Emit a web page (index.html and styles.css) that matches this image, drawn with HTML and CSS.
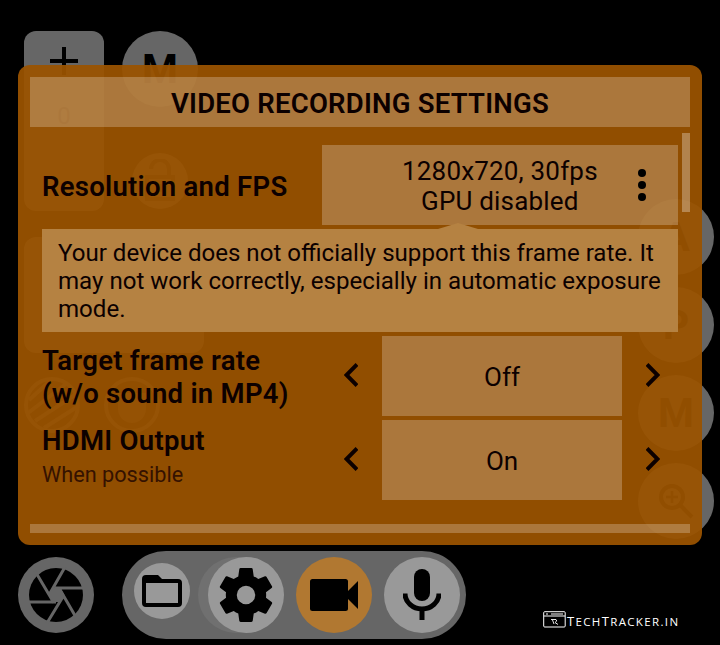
FILE: index.html
```html
<!DOCTYPE html>
<html lang="en">
<head>
<meta charset="utf-8">
<title>Video recording settings</title>
<link rel="stylesheet" href="styles.css">
</head>
<body>
<div class="screen">
  <div class="viewfinder">
    <div class="left-tools">
      <div class="tool-row">
        <div class="card exposure">
          <svg width="28" height="28" viewBox="0 0 28 28"><path d="M14 0v28M0 14h28" stroke="#000" stroke-width="4"/></svg>
          <span class="zero">0</span>
        </div>
        <div class="mode-stack">
          <div class="round mode"><span class="letter">M</span></div>
          <div class="round small">
            <svg width="32" height="44" viewBox="0 0 32 44"><path d="M7 10a9 9 0 0 1 18 0v7" fill="none" stroke="#222" stroke-width="4"/><path d="M3 18h26v22H3z" fill="none" stroke="#222" stroke-width="4"/><circle cx="16" cy="29" r="4" fill="#222"/></svg>
          </div>
        </div>
      </div>
      <div class="card wide"></div>
      <div class="filters">
        <svg width="56" height="56" viewBox="0 0 56 56" fill="none" stroke="#555" stroke-width="4"><circle cx="28" cy="28" r="26"/><path d="M5 23L26 4M4 36L42 7M11 44L51 18M20 51L53 30"/></svg>
        <svg width="56" height="56" viewBox="0 0 56 56" fill="none" stroke="#555" stroke-width="4"><circle cx="28" cy="28" r="26"/><path d="M14 16h28v16a14 14 0 0 1-28 0z" fill="#444" stroke="none"/></svg>
      </div>
    </div>
    <div class="right-tools">
      <div class="round"><span class="letter">A</span></div>
      <div class="round"><span class="letter">P</span></div>
      <div class="round"><span class="letter">M</span></div>
      <div class="round"><svg width="36" height="36" viewBox="0 0 36 36" fill="none" stroke="#000" stroke-width="4"><circle cx="14" cy="14" r="11"/><path d="M22 22l12 12"/><path d="M8 14h12M14 8v12" stroke-width="2.5"/></svg></div>
    </div>
  </div>

  <div class="bottom">
    <div class="round shutter">
      <svg width="76" height="76" viewBox="0 0 76 76"><circle cx="38" cy="38" r="27"/><path d="M47 10L31 38M67 31H37M59 62L41 31M29 66L46 38M9 45H38M17 14L36 46" stroke="#666" stroke-width="3"/><path d="M34.500 31h8l4 7-4 7h-8l-4-7z" fill="#666"/></svg>
    </div>
    <div class="pill">
      <div class="disc folder"><svg width="40" height="32" viewBox="0 0 40 32"><path fill-rule="evenodd" d="M4 0h12l4 4h16q4 0 4 4v20q0 4-4 4H4q-4 0-4-4V4q0-4 4-4zM4 8v20h32V8z"/></svg></div>
      <div class="disc gear">
        <svg width="56" height="56" viewBox="2 2 20 20"><path d="M19.140 12.940c.04-.3.060-.61.060-.94s-.02-.64-.07-.94l2.030-1.580a.49.49 0 0 0 .12-.61l-1.920-3.320a.49.49 0 0 0-.59-.22l-2.390.96a7 7 0 0 0-1.620-.94l-.36-2.540A.48.48 0 0 0 13.920 2.400h-3.840a.48.48 0 0 0-.48.410l-.36 2.540c-.59.240-1.130.57-1.620.94l-2.390-.96a.49.49 0 0 0-.59.220L2.720 8.870a.48.48 0 0 0 .12.610l2.030 1.580a6 6 0 0 0 0 1.880l-2.030 1.580a.49.49 0 0 0-.12.610l1.920 3.320c.12.220.37.290.59.220l2.390-.96c.5.38 1.030.7 1.620.94l.36 2.540c.05.240.24.410.48.410h3.840c.24 0 .44-.17.480-.41l.36-2.540c.59-.24 1.130-.56 1.620-.94l2.390.96c.22.080.47 0 .59-.22l1.920-3.320a.48.48 0 0 0-.12-.61zM12 15.300a3.300 3.300 0 1 1 0-6.600 3.300 3.300 0 0 1 0 6.600z"/></svg>
      </div>
      <div class="disc video"><svg width="48" height="32" viewBox="0 0 48 32"><rect width="38" height="32" rx="2.500"/><path d="M37 13L48 2v28L37 19z"/></svg></div>
      <div class="disc mic"><svg width="38" height="52" viewBox="0 0 38 52"><rect x="11" y="0" width="16" height="32" rx="8"/><path d="M2 24.500a17 15.500 0 0 0 34 0M19 40v11" fill="none" stroke="#000" stroke-width="5"/></svg></div>
    </div>
    <div class="brand">
      <svg width="23" height="17" viewBox="0 0 23 17" fill="none" stroke="#fff"><rect x=".7" y=".7" width="21.500" height="15.300" rx="1"/><path d="M1 5h21M3 3h2M8 3h12"/><path d="M8 8.500h5q2 1.500-1 3l3 2M9.500 9l1.500 4" stroke-width=".9"/></svg>
      <span class="brand-name"><b>T</b>ECH<b>T</b>RACKER.IN</span>
    </div>
  </div>

  <section class="dialog">
    <h1 class="title"><span>VIDEO RECORDING SETTINGS</span></h1>
    <div class="body">
      <div class="settings">
        <div class="resolution">
          <div class="label">Resolution and FPS</div>
          <div class="field select">
            <div class="choice">1280x720, 30fps<br>GPU disabled</div>
            <svg class="dots" width="8" height="32" viewBox="0 0 8 32"><circle cx="4" cy="4" r="4"/><circle cx="4" cy="16" r="4"/><circle cx="4" cy="28" r="4"/></svg>
          </div>
        </div>
        <p class="message">Your device does not officially support this frame rate. It<br>may not work correctly, especially in automatic exposure<br>mode.</p>
        <div class="option">
          <div class="label">Target frame rate<br>(w/o sound in MP4)</div>
          <svg class="arrow" width="14" height="24" viewBox="0 0 14 24"><path d="M13 1.500L2.500 12 13 22.500"/></svg>
          <div class="field">Off</div>
          <svg class="arrow" width="14" height="24" viewBox="0 0 14 24"><path d="M1 1.500L11.500 12 1 22.500"/></svg>
        </div>
        <div class="option">
          <div class="label hdmi">HDMI Output<small>When possible</small></div>
          <svg class="arrow" width="14" height="24" viewBox="0 0 14 24"><path d="M13 1.500L2.500 12 13 22.500"/></svg>
          <div class="field">On</div>
          <svg class="arrow" width="14" height="24" viewBox="0 0 14 24"><path d="M1 1.500L11.500 12 1 22.500"/></svg>
        </div>
      </div>
      <div class="scrollbar"></div>
    </div>
    <div class="footer-line"></div>
  </section>
</div>
</body>
</html>
```
FILE: styles.css
```css
* { box-sizing: border-box; }
body { margin: 0; background: #000; font-family: Roboto, sans-serif; color: #0c0000; }
svg { display: block; flex: none; }
.screen { position: relative; width: 720px; height: 645px; overflow: hidden; }
.viewfinder { display: flex; justify-content: space-between; height: 551px; padding: 31px 6px 0 24px; }
.tool-row { display: flex; gap: 18px; height: 180px; }
.card { background: #666; border-radius: 12px; }
.exposure { width: 80px; display: flex; flex-direction: column; align-items: center; padding-top: 16px; }
.zero { margin-top: 25px; font-size: 24px; line-height: 32px; color: #0a0a0a; }
.mode-stack { display: flex; flex-direction: column; align-items: center; gap: 46px; }
.round { width: 76px; height: 76px; border-radius: 50%; background: #666; display: flex; align-items: center; justify-content: center; }
.round.small { width: 56px; height: 56px; }
.letter { font-size: 41px; font-weight: 700; line-height: 48px; color: #000; }
.wide { width: 180px; height: 116px; margin-top: 26px; }
.filters { display: flex; gap: 24px; margin-top: 24px; }
.right-tools { display: flex; flex-direction: column; gap: 12px; padding-top: 168px; }

.bottom { display: flex; height: 94px; padding-left: 18px; }
.shutter { margin-top: 6px; margin-right: 28px; flex: none; }
.pill { display: flex; align-items: center; width: 344px; height: 88px; padding-left: 12px; border-radius: 44px; background: #666; flex: none; }
.disc { width: 76px; height: 76px; border-radius: 50%; background: #999; display: flex; align-items: center; justify-content: center; margin-right: 12px; flex: none; }
.disc.folder { width: 56px; height: 56px; margin: 0 18px 8px 0; }
.disc.gear { box-shadow: -10px 0 0 #707070; }
.disc.video { background: #b17831; }
.disc.mic { margin-right: 0; }
.brand { display: flex; gap: 1px; margin: 60px 0 0 77px; height: 20px; color: #fff; }
.brand-name { font: 11.500px/20px "Open Sans", sans-serif; letter-spacing: 1.350px; white-space: nowrap; }
.brand-name b { font-size: 13px; font-weight: 400; }

.dialog { position: absolute; left: 18px; top: 65px; width: 684px; height: 480px; padding: 12px; border-radius: 12px; background: rgba(154, 83, 0, .94); display: flex; flex-direction: column; }
.title { margin: 0; height: 50px; background: rgba(255, 255, 255, .235); text-align: center; font-size: 27.500px; line-height: 54px; font-weight: 600; letter-spacing: .22px; white-space: nowrap; }
.body { display: flex; height: 397px; justify-content: space-between; padding-top: 6px; }
.settings { width: 648px; padding: 12px 0 0 12px; }
.resolution { display: flex; height: 80px; justify-content: space-between; }
.label { font-size: 27.500px; font-weight: 600; letter-spacing: .27px; line-height: 33px; white-space: nowrap; }
.resolution .label { line-height: 84px; }
.field { background: rgba(255, 255, 255, .235); display: flex; justify-content: center; align-items: center; width: 240px; height: 80px; font-size: 26px; line-height: 30px; padding-top: 2px; }
.select { width: 356px; padding: 2px 32px 0 80px; justify-content: space-between; letter-spacing: .18px; }
.dots { margin-bottom: 2px; }
.choice { text-align: center; white-space: nowrap; }
.message { position: relative; margin: 4px 0; height: 103px; padding: 10px 16px; background: #b58242; font-size: 24.080px; line-height: 28px; white-space: nowrap; }
.message::before { content: ""; position: absolute; left: 396px; top: -6px; width: 40px; height: 6px; background: #b58242; clip-path: polygon(0 100%, 50% 0, 100% 100%); }
.option { display: grid; grid-template-columns: 278px 14px 240px 14px; column-gap: 24px; align-items: center; height: 80px; margin-bottom: 4px; }
.arrow { fill: none; stroke: #0c0000; stroke-width: 4; margin-bottom: 2px; }
.option .label { align-self: start; padding-top: 8px; }
.option .hdmi { padding-top: 4px; }
.label small { display: block; font-size: 21.700px; font-weight: 400; letter-spacing: 0; line-height: 35px; color: #351200; }
.scrollbar { width: 8px; height: 79px; background: rgba(255, 255, 255, .3); }
.footer-line { height: 9px; background: rgba(255, 255, 255, .235); }
```
